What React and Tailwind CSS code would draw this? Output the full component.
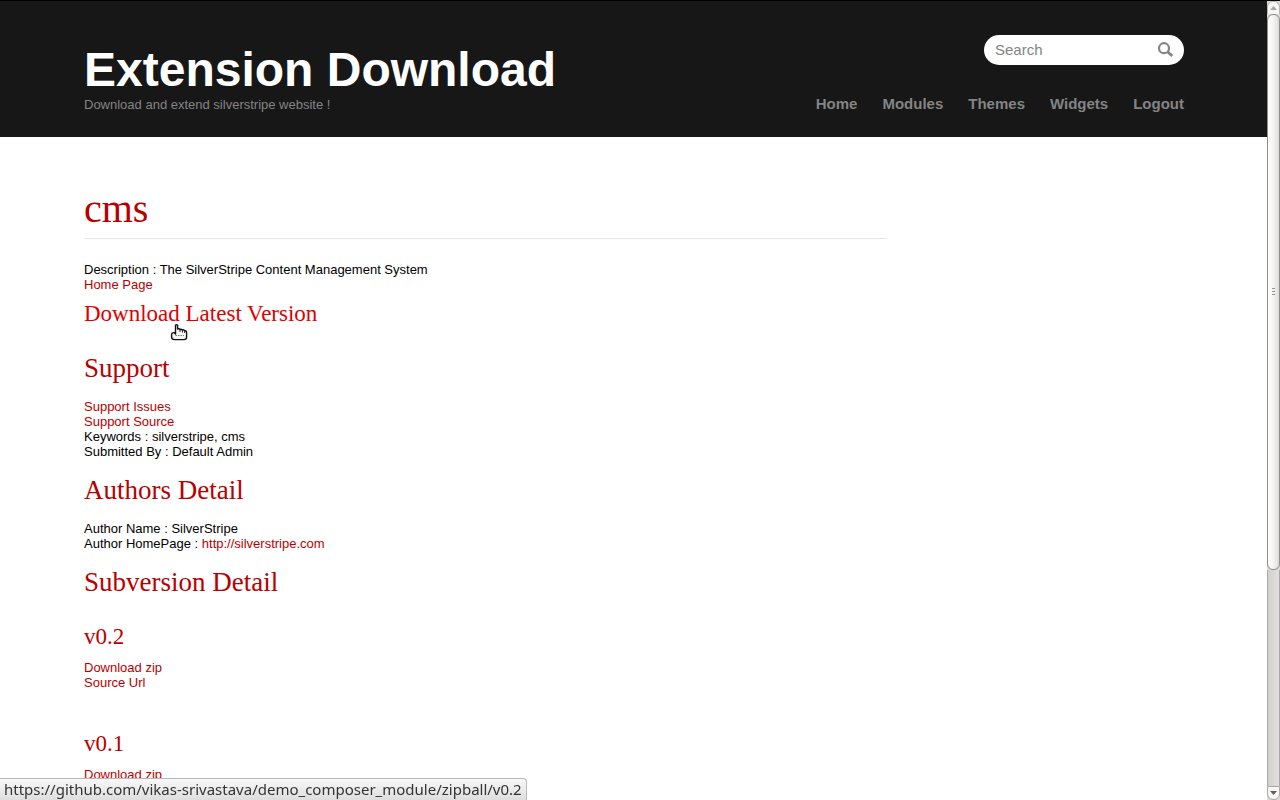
const navItems = ["Home", "Modules", "Themes", "Widgets", "Logout"];

const link = "text-[#b80000] hover:text-[#e00000]";
const h2 = "my-4 font-['Liberation_Serif',serif] text-[27px] leading-[30px] text-[#b80000]";
const h3 = "font-['Liberation_Serif',serif] text-[23px] leading-6";

function Header() {
  return (
    <header className="border-t border-black bg-[#171717]">
      <div className="mx-auto flex h-[136px] max-w-[1101px] justify-between pl-px">
        <div className="pt-[41px]">
          <h1 className="text-5xl leading-[55px] font-bold text-white">
            <a href="#home">Extension Download</a>
          </h1>
          <p className="text-[13px] leading-[15px] text-[#848484]">Download and extend silverstripe website !</p>
        </div>
        <div className="flex flex-col items-end pt-[34px]">
          <form className="flex h-[30px] w-[200px] items-center rounded-full bg-white pr-[10px] pl-[11px]">
            <input
              type="text"
              aria-label="Search"
              placeholder="Search"
              className="min-w-0 flex-1 bg-transparent text-[15px] leading-5 text-[#848484] outline-none placeholder:text-[#848484]"
            />
            <button type="button" aria-label="Submit search" className="text-[#848484]">
              <svg width="17" height="17" viewBox="0 0 17 17" fill="none" stroke="currentColor">
                <circle cx="7" cy="6.2" r="5" strokeWidth="2.2" />
                <path d="M10.6 9.8 L15.2 14" strokeWidth="2.8" />
              </svg>
            </button>
          </form>
          <nav className="mt-[29px] flex gap-[25px] text-[15px] leading-5 font-bold text-[#848484]">
            {navItems.map((item) => (
              <a key={item} href={`#${item.toLowerCase()}`}>
                {item}
              </a>
            ))}
          </nav>
        </div>
      </div>
    </header>
  );
}

function HandPointer() {
  return (
    <svg className="pointer-events-none absolute top-[21px] left-[86px]" width="19" height="20" viewBox="0 0 19 20">
      <path
        d="M5.5 2.2 Q6.6 1 7.6 2.2 V6 Q9 5.2 10 6.5 Q11.4 5.8 12.4 7 Q14 6.3 14.6 7.8 Q16.5 7.6 16.6 9.5 V14 Q16.6 16.6 14 16.6 H4.5 Q1.6 16.6 1.6 14 V11.2 Q2 9.4 4 9.6 L5.5 11 Z"
        fill="#f6f6f6"
        stroke="#111"
        strokeWidth="1.4"
        strokeLinejoin="round"
      />
      <path d="M10 6.5 V9 M12.5 7.2 V9.6 M14.7 8 V10" stroke="#111" strokeWidth="0.9" />
      <path d="M5.5 12.5 H14" stroke="#777" strokeWidth="1" strokeDasharray="1.5 1" />
    </svg>
  );
}

function Version({ name, className }) {
  return (
    <section className={className}>
      <h3 className={`${h3} mb-[11px] text-[#b80000]`}>{name}</h3>
      <p><a className={link} href="#zip">Download zip</a></p>
      <p><a className={link} href="#source">Source Url</a></p>
    </section>
  );
}

function Scrollbar() {
  return (
    <div className="flex w-[13px] shrink-0 flex-col border-t border-black bg-[#dcdad8]" aria-hidden="true">
      <div className="flex h-[13px] items-center justify-center rounded-t-md border border-b-0 border-[#b5b2af] bg-[#f7f6f5]">
        <svg width="7" height="4" viewBox="0 0 7 4"><path d="M0 4 L3.5 0 L7 4 Z" fill="#aaa6a3" /></svg>
      </div>
      <div className="flex grow-[555] basis-0 flex-col items-center justify-center gap-[2px] rounded-md border border-[#8e8b88] bg-gradient-to-r from-white via-[#f4f3f2] to-[#dedcda]">
        <span className="h-px w-[3px] bg-[#96928f]" />
        <span className="h-px w-[3px] bg-[#96928f]" />
        <span className="h-px w-[3px] bg-[#96928f]" />
      </div>
      <div className="grow-[217] basis-0 border-x border-[#aaa7a4] bg-gradient-to-r from-[#d3d1ce] to-[#e2e0de]" />
      <div className="flex h-[14px] items-center justify-center rounded-b-md border border-[#aaa7a4] bg-[#f7f6f5]">
        <svg width="7" height="4" viewBox="0 0 7 4"><path d="M0 0 H7 L3.5 4 Z" fill="#605c59" /></svg>
      </div>
    </div>
  );
}

export default function App() {
  return (
    <div className="flex h-screen overflow-hidden bg-white font-['Liberation_Sans',Arial,sans-serif] text-[13px] leading-[15px] text-black">
      <div className="min-w-0 flex-1 overflow-hidden">
        <Header />
        <main className="mx-auto max-w-[1101px] pt-[52px] pl-px">
          <article className="w-[73%]">
            <h1 className="mb-[23px] border-b border-[#e5e5e5] pb-[9px] font-['Liberation_Serif',serif] text-[40px] leading-10 text-[#b80000]">
              cms
            </h1>
            <p>Description : The SilverStripe Content Management System</p>
            <p><a className={link} href="#homepage">Home Page</a></p>
            <div className="relative mt-[10px] mb-[27px]">
              <h3 className={h3}>
                <a className="text-[#e00000]" href="#latest">Download Latest Version</a>
              </h3>
              <HandPointer />
            </div>
            <h2 className={h2}>Support</h2>
            <p><a className={link} href="#issues">Support Issues</a></p>
            <p><a className={link} href="#support">Support Source</a></p>
            <p>Keywords : silverstripe, cms</p>
            <p>Submitted By : Default Admin</p>
            <h2 className={h2}>Authors Detail</h2>
            <p>Author Name : SilverStripe</p>
            <p>
              Author HomePage : <a className={link} href="#silverstripe">http://silverstripe.com</a>
            </p>
            <h2 className={h2}>Subversion Detail</h2>
            <Version name="v0.2" className="mt-7" />
            <Version name="v0.1" className="mt-[42px]" />
          </article>
        </main>
      </div>
      <Scrollbar />
      <div className="fixed bottom-0 left-0 rounded-tr border-t border-r border-[#b9b9b9] bg-gradient-to-b from-[#f8f8f8] to-[#dedede] px-1 font-['Noto_Sans',sans-serif] text-[15px] leading-[21px] text-[#333]">
        https://github.com/vikas-srivastava/demo_composer_module/zipball/v0.2
      </div>
    </div>
  );
}
